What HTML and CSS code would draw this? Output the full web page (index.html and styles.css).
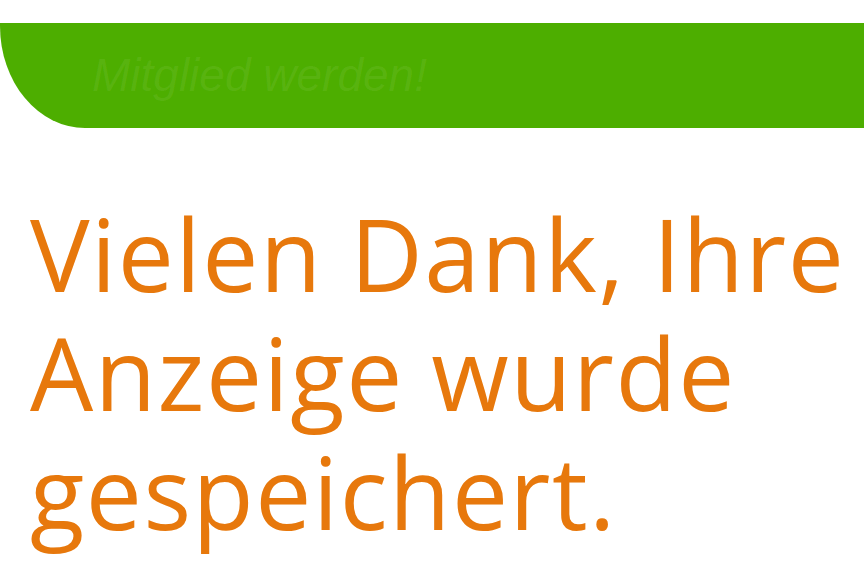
FILE: index.html
```html
<!DOCTYPE html>
<html lang="de">
<head>
<meta charset="utf-8">
<title>Vielen Dank</title>
<link rel="stylesheet" href="styles.css">
</head>
<body>
<header class="banner">
  <span class="banner-text">Mitglied werden!</span>
</header>
<main class="content">
  <h1 class="thanks">Vielen Dank, Ihre<br>Anzeige wurde<br>gespeichert.</h1>
</main>
</body>
</html>
```

FILE: styles.css
```css
html, body {
  margin: 0;
  padding: 0;
  background: #ffffff;
  width: 864px;
  height: 576px;
  overflow: hidden;
}
body {
  padding-top: 23px;
  box-sizing: border-box;
}
.banner {
  height: 105px;
  background: #4dae00;
  border-bottom-left-radius: 85px 102px;
  display: flex;
  align-items: flex-start;
  padding-left: 92px;
  padding-top: 25px;
  box-sizing: border-box;
}
.banner-text {
  font-family: "Liberation Sans", Arial, sans-serif;
  font-style: italic;
  font-size: 46px;
  line-height: 54px;
  color: rgba(255, 255, 255, 0.07);
}
.content {
  padding-left: 30px;
}
.thanks {
  margin: 0;
  padding-top: 66px;
  font-family: "Open Sans", sans-serif;
  font-weight: 400;
  font-size: 100px;
  line-height: 119px;
  letter-spacing: 1.5px;
  color: #e7780c;
}
```
